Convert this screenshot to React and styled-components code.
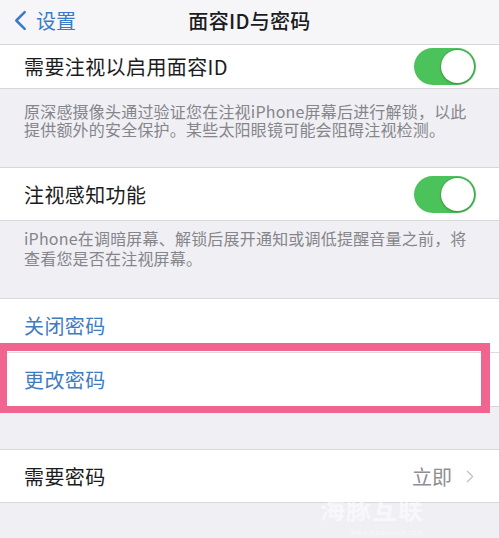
import React from "react";
import styled, { createGlobalStyle } from "styled-components";

const GlobalStyle = createGlobalStyle`
  html, body {
    margin: 0;
    padding: 0;
    background: #efeff4;
  }
  body {
    font-family: "Noto Sans CJK SC", "Noto Sans", sans-serif;
    -webkit-font-smoothing: antialiased;
  }
`;

const Screen = styled.div`
  position: relative;
  width: 499px;
  height: 538px;
  overflow: hidden;
  background: #efeff4;
`;

const NavBar = styled.div`
  display: grid;
  grid-template-columns: 1fr auto 1fr;
  align-items: center;
  height: 45px;
  padding: 0 14px;
  background: #f6f6f8;
  border-bottom: 1px solid #d6d6da;
  box-sizing: border-box;
`;

const Back = styled.div`
  display: flex;
  align-items: center;
  gap: 9px;
  color: #3a7bc8;
  font-size: 20px;
  margin-top: -3px;
`;

const Title = styled.div`
  font-size: 20px;
  font-weight: 500;
  color: #1c1c1e;
  letter-spacing: 0.3px;
  margin-top: -4px;
`;

const Group = styled.div`
  background: #fff;
  border-bottom: 1px solid #d8d8dc;
  border-top: ${(p) => (p.$noTop ? "none" : "1px solid #d8d8dc")};
  margin-top: ${(p) => p.$gap || 0}px;
`;

const Row = styled.div`
  position: relative;
  display: flex;
  align-items: center;
  justify-content: space-between;
  height: ${(p) => p.$h || 53}px;
  padding: 0 24px;
  box-sizing: border-box;
  & + & {
    border-top: 1px solid #dcdce0;
  }
`;

const Label = styled.span`
  font-size: 20px;
  letter-spacing: 0.4px;
  color: ${(p) => (p.$link ? "#3f7cbf" : "#1c1c1e")};
`;

const Footer = styled.div`
  padding: ${(p) => p.$pad || "12px 24px 0"};
  height: ${(p) => p.$h}px;
  box-sizing: border-box;
  font-size: 16px;
  line-height: ${(p) => p.$lh || 19}px;
  color: #85858a;
  letter-spacing: 0.2px;
`;

const Toggle = styled.div`
  position: relative;
  width: 62px;
  height: 37px;
  border-radius: 19px;
  background: #4cc35a;
  flex-shrink: 0;
  margin-right: -1px;
  &::after {
    content: "";
    position: absolute;
    right: 2px;
    top: 2px;
    width: 33px;
    height: 33px;
    border-radius: 50%;
    background: #fff;
    box-shadow: 0 0 0 1px rgba(0, 0, 0, 0.12), 0 2px 3px rgba(0, 0, 0, 0.12);
  }
`;

const Detail = styled.div`
  display: flex;
  align-items: center;
  gap: 14px;
  font-size: 20px;
  color: #8e8e93;
  margin-right: 1px;
`;

// pink annotation frame drawn over the "更改密码" row
const Highlight = styled.div`
  position: absolute;
  left: 0;
  top: -10px;
  width: 490px;
  height: 70px;
  border: 7px solid #f06590;
  border-top-width: 8px;
  border-right-width: 9px;
  box-sizing: border-box;
  pointer-events: none;
`;

const Watermark = styled.div`
  position: absolute;
  left: 320px;
  top: 490px;
  display: flex;
  flex-direction: column;
  align-items: flex-end;
  gap: 1px;
  color: rgba(255, 255, 255, 0.6);
  font-size: 25px;
  font-weight: 700;
  letter-spacing: 1px;
  line-height: 36px;
`;

const WatermarkUrl = styled.span`
  font-size: 7px;
  line-height: 10px;
  font-weight: 400;
  letter-spacing: 0.5px;
`;

const Chevron = ({ color, w, h, sw, dir = "left" }) => (
  <svg width={w} height={h} viewBox="0 0 12 20" fill="none">
    <path
      d={dir === "left" ? "M10 2L2 10l8 8" : "M2 2l8 8-8 8"}
      stroke={color}
      strokeWidth={sw}
      strokeLinecap="round"
      strokeLinejoin="round"
    />
  </svg>
);

export default function App() {
  return (
    <Screen>
      <GlobalStyle />
      <NavBar>
        <Back>
          <Chevron color="#3a7bc8" w={13} h={21} sw={2.4} />
          设置
        </Back>
        <Title>面容ID与密码</Title>
        <div />
      </NavBar>

      <Group $noTop>
        <Row $h={43}>
          <Label>需要注视以启用面容ID</Label>
          <Toggle />
        </Row>
      </Group>
      <Footer $h={78} $pad="13px 24px 0" $lh={18}>
        原深感摄像头通过验证您在注视iPhone屏幕后进行解锁，以此提供额外的安全保护。某些太阳眼镜可能会阻碍注视检测。
      </Footer>

      <Group>
        <Row $h={52}>
          <Label>注视感知功能</Label>
          <Toggle />
        </Row>
      </Group>
      <Footer $h={77} $pad="7px 24px 0" $lh={20}>
        iPhone在调暗屏幕、解锁后展开通知或调低提醒音量之前，将查看您是否在注视屏幕。
      </Footer>

      <Group>
        <Row $h={53}>
          <Label $link>关闭密码</Label>
        </Row>
        <Row $h={54}>
          <Label $link>更改密码</Label>
          <Highlight />
        </Row>
      </Group>

      <Group $gap={42}>
        <Row $h={52}>
          <Label>需要密码</Label>
          <Detail>
            立即
            <Chevron color="#c4c4c8" w={8} h={15} sw={2} dir="right" />
          </Detail>
        </Row>
      </Group>

      <Watermark>
        海豚互联
        <WatermarkUrl>www.haitunvip.com</WatermarkUrl>
      </Watermark>
    </Screen>
  );
}
